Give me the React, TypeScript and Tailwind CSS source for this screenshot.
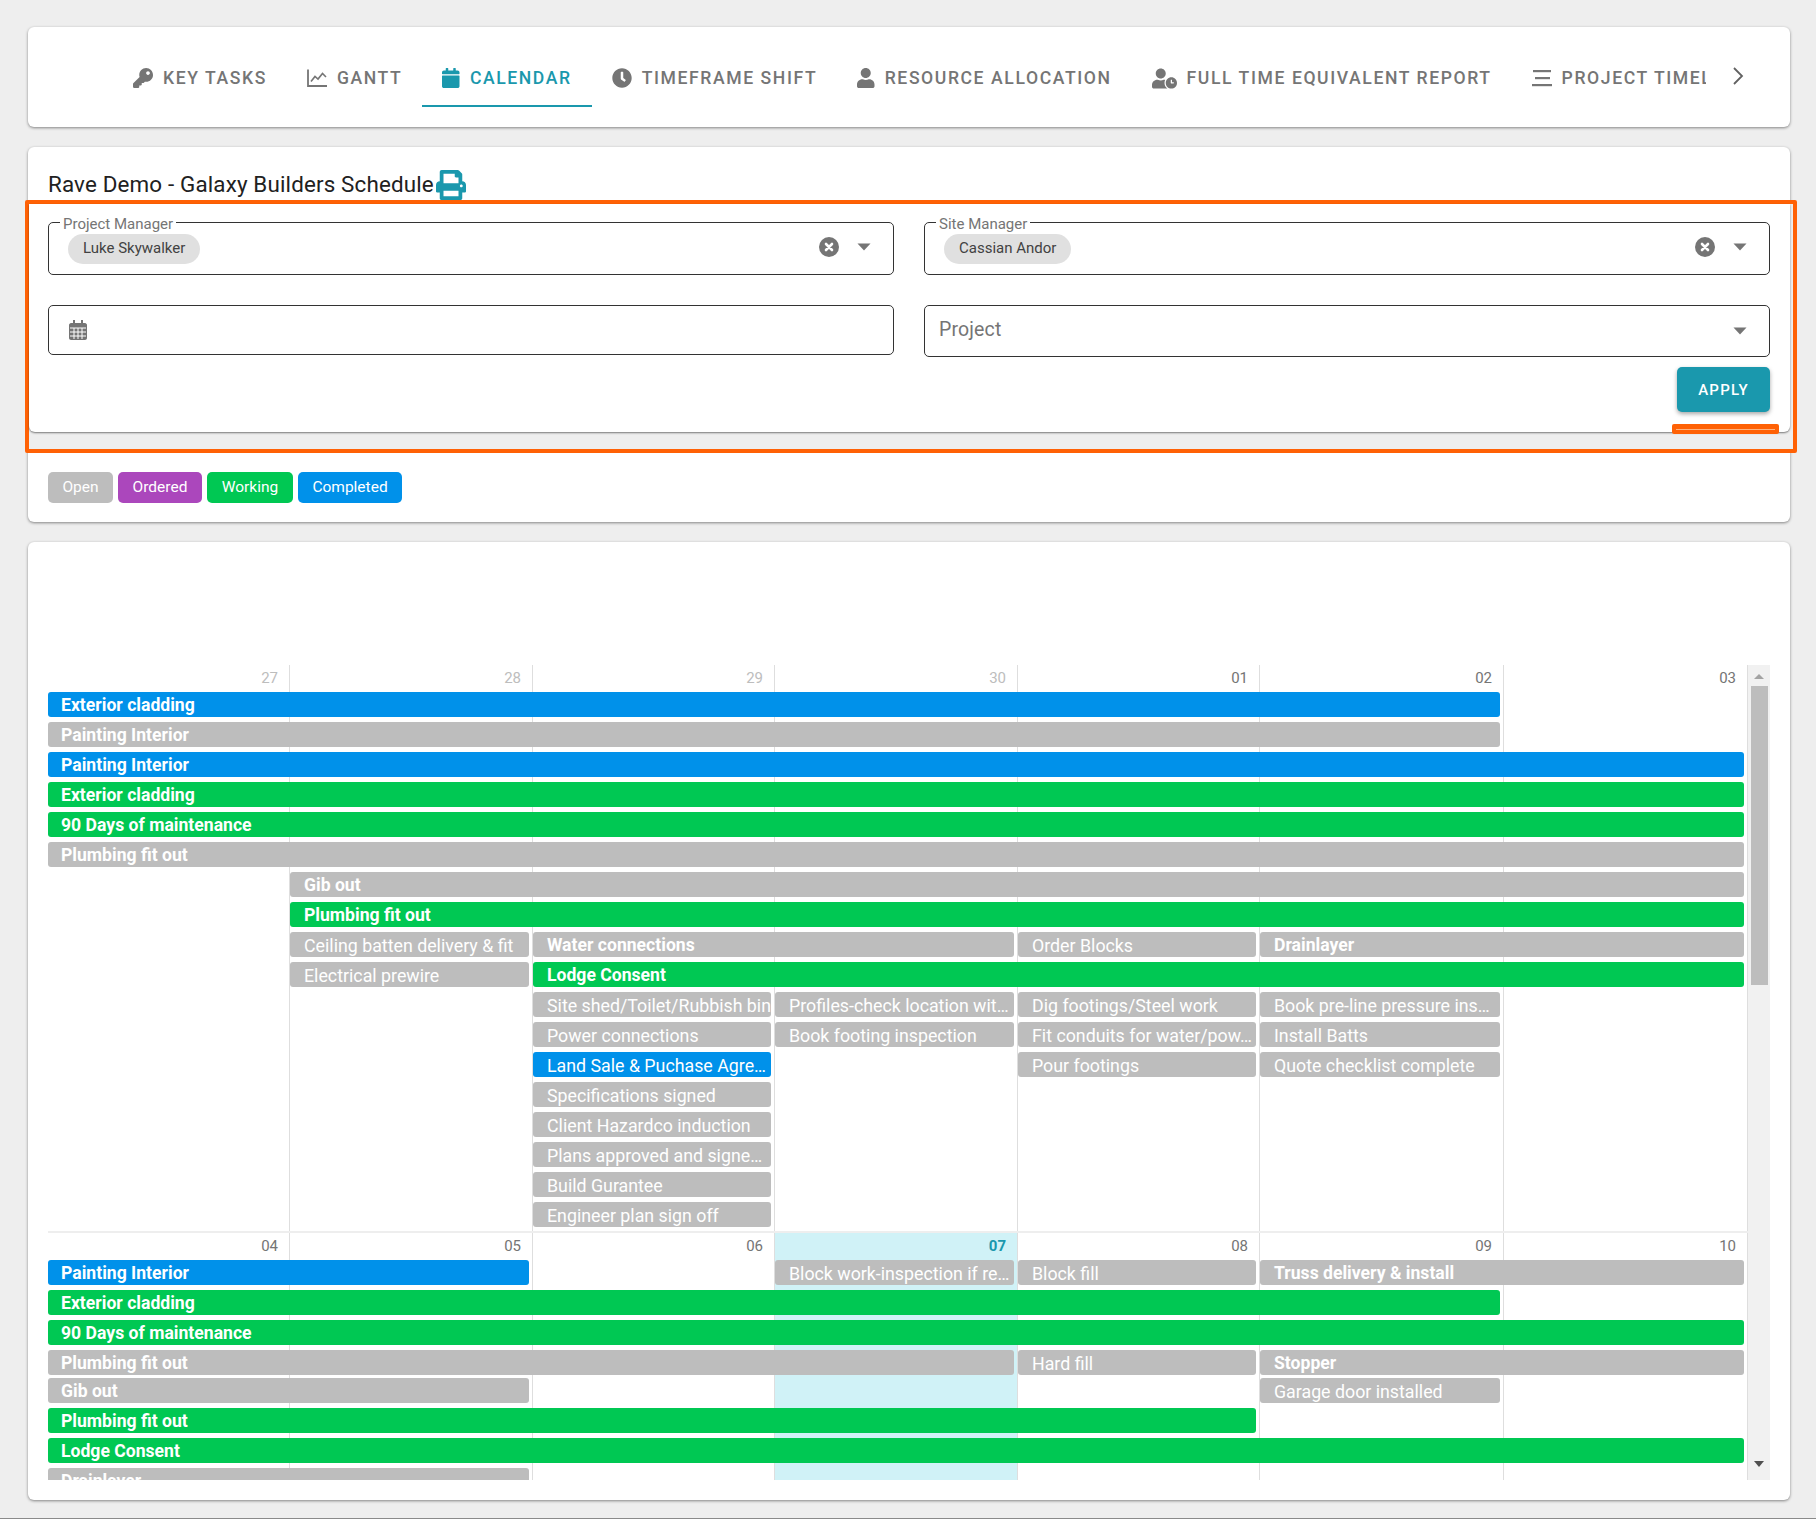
import React from 'react';
import { FaKey, FaCalendar, FaClock, FaUser, FaUserClock, FaPrint } from 'react-icons/fa';

// --- Icons drawn by hand where the packages have no close match ---
const ChartIcon = () => (
  <svg width="20" height="20" viewBox="0 0 20 20" fill="none" stroke="currentColor" strokeWidth="1.8">
    <path d="M1 1.5V18H20" />
    <path d="M4 13.5L8 8.5L11 11L15.5 5.5L19 9" strokeWidth="1.6" />
  </svg>
);

const LinesIcon = () => (
  <svg width="20" height="20" viewBox="0 0 20 20" fill="currentColor">
    <rect x="1" y="2" width="18" height="2.2" />
    <rect x="3" y="9" width="15" height="2.2" />
    <rect x="0" y="16" width="20" height="2.2" />
  </svg>
);

const ChevronRight = () => (
  <svg width="12" height="18" viewBox="0 0 12 18" fill="none" stroke="#616161" strokeWidth="1.8">
    <path d="M2 1L10 9L2 17" />
  </svg>
);

const ClearIcon = () => (
  <svg width="20" height="20" viewBox="0 0 20 20">
    <circle cx="10" cy="10" r="10" fill="#757575" />
    <path d="M7 7L13 13M13 7L7 13" stroke="#fff" strokeWidth="2.6" strokeLinecap="round" />
  </svg>
);

const DropArrow = () => (
  <svg width="14" height="8" viewBox="0 0 14 8" fill="#757575">
    <path d="M0.5 0.5H13.5L7 7.5Z" />
  </svg>
);

const CalendarGridIcon = () => (
  <svg width="18" height="20" viewBox="0 0 18 20">
    <path d="M4 0H6V3H12V0H14V3H16C17 3 18 4 18 5V18C18 19 17 20 16 20H2C1 20 0 19 0 18V5C0 4 1 3 2 3H4Z" fill="#757575" />
    <path d="M1 8H17M1 12H17M1 16H17M5 8V19M9 8V19M13 8V19" stroke="#fff" strokeWidth="1" />
  </svg>
);

// --- Tabs ---
const tabs = [
  { label: 'Key Tasks', icon: <FaKey size={20} /> },
  { label: 'Gantt', icon: <ChartIcon /> },
  { label: 'Calendar', icon: <FaCalendar className="h-5 w-[17.5px]" />, active: true },
  { label: 'Timeframe Shift', icon: <FaClock size={20} /> },
  { label: 'Resource Allocation', icon: <FaUser className="h-5 w-[17.5px]" /> },
  { label: 'Full Time Equivalent Report', icon: <FaUserClock size={25} /> },
  { label: 'Project Timeline', icon: <LinesIcon /> },
];

// --- Calendar data ---
type Tone = 'blue' | 'gray' | 'green';
type Bar = { title: string; tone: Tone; place: string; bold?: boolean };

const toneClass: Record<Tone, string> = {
  blue: 'bg-[#0091ea]',
  gray: 'bg-[#bdbdbd]',
  green: 'bg-[#00c853]',
};

const weekCols = 'grid-cols-[242px_243px_242px_243px_242px_244px_244px]';

const weekOneDays = ['27', '28', '29', '30', '01', '02', '03'];
const weekTwoDays = ['04', '05', '06', '07', '08', '09', '10'];

const weekOne: Bar[][] = [
  [{ title: 'Exterior cladding', tone: 'blue', place: 'col-start-1 col-span-6', bold: true }],
  [{ title: 'Painting Interior', tone: 'gray', place: 'col-start-1 col-span-6', bold: true }],
  [{ title: 'Painting Interior', tone: 'blue', place: 'col-start-1 col-span-7', bold: true }],
  [{ title: 'Exterior cladding', tone: 'green', place: 'col-start-1 col-span-7', bold: true }],
  [{ title: '90 Days of maintenance', tone: 'green', place: 'col-start-1 col-span-7', bold: true }],
  [{ title: 'Plumbing fit out', tone: 'gray', place: 'col-start-1 col-span-7', bold: true }],
  [{ title: 'Gib out', tone: 'gray', place: 'col-start-2 col-span-6', bold: true }],
  [{ title: 'Plumbing fit out', tone: 'green', place: 'col-start-2 col-span-6', bold: true }],
  [
    { title: 'Ceiling batten delivery & fit', tone: 'gray', place: 'col-start-2 col-span-1' },
    { title: 'Water connections', tone: 'gray', place: 'col-start-3 col-span-2', bold: true },
    { title: 'Order Blocks', tone: 'gray', place: 'col-start-5 col-span-1' },
    { title: 'Drainlayer', tone: 'gray', place: 'col-start-6 col-span-2', bold: true },
  ],
  [
    { title: 'Electrical prewire', tone: 'gray', place: 'col-start-2 col-span-1' },
    { title: 'Lodge Consent', tone: 'green', place: 'col-start-3 col-span-5', bold: true },
  ],
  [
    { title: 'Site shed/Toilet/Rubbish bin', tone: 'gray', place: 'col-start-3 col-span-1' },
    { title: 'Profiles-check location wit…', tone: 'gray', place: 'col-start-4 col-span-1' },
    { title: 'Dig footings/Steel work', tone: 'gray', place: 'col-start-5 col-span-1' },
    { title: 'Book pre-line pressure ins…', tone: 'gray', place: 'col-start-6 col-span-1' },
  ],
  [
    { title: 'Power connections', tone: 'gray', place: 'col-start-3 col-span-1' },
    { title: 'Book footing inspection', tone: 'gray', place: 'col-start-4 col-span-1' },
    { title: 'Fit conduits for water/pow…', tone: 'gray', place: 'col-start-5 col-span-1' },
    { title: 'Install Batts', tone: 'gray', place: 'col-start-6 col-span-1' },
  ],
  [
    { title: 'Land Sale & Puchase Agre…', tone: 'blue', place: 'col-start-3 col-span-1' },
    { title: 'Pour footings', tone: 'gray', place: 'col-start-5 col-span-1' },
    { title: 'Quote checklist complete', tone: 'gray', place: 'col-start-6 col-span-1' },
  ],
  [{ title: 'Specifications signed', tone: 'gray', place: 'col-start-3 col-span-1' }],
  [{ title: 'Client Hazardco induction', tone: 'gray', place: 'col-start-3 col-span-1' }],
  [{ title: 'Plans approved and signe…', tone: 'gray', place: 'col-start-3 col-span-1' }],
  [{ title: 'Build Gurantee', tone: 'gray', place: 'col-start-3 col-span-1' }],
  [{ title: 'Engineer plan sign off', tone: 'gray', place: 'col-start-3 col-span-1' }],
];

const weekTwo: Bar[][] = [
  [
    { title: 'Painting Interior', tone: 'blue', place: 'col-start-1 col-span-2', bold: true },
    { title: 'Block work-inspection if re…', tone: 'gray', place: 'col-start-4 col-span-1' },
    { title: 'Block fill', tone: 'gray', place: 'col-start-5 col-span-1' },
    { title: 'Truss delivery & install', tone: 'gray', place: 'col-start-6 col-span-2', bold: true },
  ],
  [{ title: 'Exterior cladding', tone: 'green', place: 'col-start-1 col-span-6', bold: true }],
  [{ title: '90 Days of maintenance', tone: 'green', place: 'col-start-1 col-span-7', bold: true }],
  [
    { title: 'Plumbing fit out', tone: 'gray', place: 'col-start-1 col-span-4', bold: true },
    { title: 'Hard fill', tone: 'gray', place: 'col-start-5 col-span-1' },
    { title: 'Stopper', tone: 'gray', place: 'col-start-6 col-span-2', bold: true },
  ],
  [
    { title: 'Gib out', tone: 'gray', place: 'col-start-1 col-span-2', bold: true },
    { title: 'Garage door installed', tone: 'gray', place: 'col-start-6 col-span-1' },
  ],
  [{ title: 'Plumbing fit out', tone: 'green', place: 'col-start-1 col-span-5', bold: true }],
  [{ title: 'Lodge Consent', tone: 'green', place: 'col-start-1 col-span-7', bold: true }],
  [{ title: 'Drainlayer', tone: 'gray', place: 'col-start-1 col-span-2', bold: true }],
];

// --- Small pieces ---
const EventBar = ({ bar }: { bar: Bar }) => (
  <div
    className={`${bar.place} ${toneClass[bar.tone]} mr-1 h-[25px] overflow-hidden whitespace-nowrap rounded-[3px] pt-px leading-[25px] text-white ${bar.place.includes('col-start-1') ? 'pl-[13px]' : 'pl-[14px]'} ${bar.bold ? 'text-[17.6px] font-bold' : 'text-[17.8px] font-normal'}`}
  >
    {bar.title}
  </div>
);

const Week = ({
  days,
  rows,
  muted = 0,
  today,
  className,
}: {
  days: string[];
  rows: Bar[][];
  muted?: number;
  today?: number;
  className: string;
}) => (
  <div className={`relative overflow-hidden ${className}`}>
    <div className={`absolute inset-0 grid ${weekCols}`}>
      {days.map((day, i) => (
        <div
          key={day}
          className={`border-r border-[#dedede] pt-[3px] pr-[11px] text-right text-[15px] leading-5 ${i === today ? 'bg-[#d0f2f7] font-bold text-[#1a98ad]' : i < muted ? 'text-[#bdbdbd]' : 'text-[#757575]'}`}
        >
          {day}
        </div>
      ))}
    </div>
    <div className="relative pt-[27px]">
      {rows.map((row, i) => (
        <div key={i} className={`grid ${weekCols} ${rows === weekTwo && i === 3 ? 'h-[28px]' : 'h-[30px]'}`}>
          {row.map(bar => (
            <EventBar key={bar.title + bar.place} bar={bar} />
          ))}
        </div>
      ))}
    </div>
  </div>
);

const Chip = ({ label }: { label: string }) => (
  <span className="flex h-[30px] items-center rounded-full bg-[#e0e0e0] px-[15px] text-[15px] text-[#424242]">
    {label}
  </span>
);

const ManagerField = ({ legend, person }: { legend: string; person: string }) => (
  <div className="relative flex h-[53px] items-center rounded-[5px] border border-[#333] pr-[22px] pl-[19px]">
    <span className="absolute -top-[9px] left-[11px] bg-white px-[3px] text-[15px] leading-5 text-[#757575]">
      {legend}
    </span>
    <Chip label={person} />
    <div className="mb-[3px] ml-auto flex items-center gap-[18px]">
      <ClearIcon />
      <DropArrow />
    </div>
  </div>
);

const statuses = [
  { label: 'Open', cls: 'w-[65px] bg-[#bdbdbd]' },
  { label: 'Ordered', cls: 'w-[84px] bg-[#ab47bc]' },
  { label: 'Working', cls: 'w-[86px] bg-[#00c853]' },
  { label: 'Completed', cls: 'w-[104px] bg-[#0091ea]' },
];

const cardClass = 'rounded-[6px] bg-white shadow-[0_1px_3px_rgba(0,0,0,0.45)]';

const App = () => (
  <div className="min-h-[1519px] border-b border-[#8a8a8a] bg-[#eeeeee] pt-[27px] pr-[26px] pl-7 font-[Roboto,sans-serif]">
    {/* Tabs */}
    <div className={`flex h-[100px] items-start pt-5 pl-[85px] ${cardClass}`}>
      <div className="flex w-[1593px] overflow-hidden">
        {tabs.map(tab => (
          <div
            key={tab.label}
            className={`flex h-[60px] shrink-0 items-center gap-[10px] border-b-2 px-5 pt-[4px] text-[17.6px] font-medium tracking-[1.58px] whitespace-nowrap uppercase ${tab.active ? 'border-[#1a98ad] text-[#1a98ad]' : 'border-transparent text-[#757575]'}`}
          >
            {tab.icon}
            {tab.label}
          </div>
        ))}
      </div>
      <div className="mt-[20px] ml-[26px]">
        <ChevronRight />
      </div>
    </div>

    {/* Filters */}
    <div className={`mt-5 h-[375px] ${cardClass}`}>
      <div className="flex items-center gap-[2px] pt-[23px] pl-5">
        <h1 className="pb-[2px] text-[22.4px] leading-[28px] font-normal tracking-[0.15px] text-[#212121]">
          Rave Demo - Galaxy Builders Schedule
        </h1>
        <FaPrint size={30} className="text-[#1a98ad]" />
      </div>

      <div className="relative -mr-[7px] -ml-[3px] rounded-[2px] border-4 border-[#ff6105] bg-[#eeeeee] pb-[17px]">
        <div className="mr-[3px] rounded-b-[6px] bg-white pt-[18px] pr-5 pb-5 pl-[19px] shadow-[0_1px_2px_rgba(0,0,0,0.5)]">
          <div className="grid grid-cols-2 items-start gap-x-[30px] gap-y-[30px]">
            <ManagerField legend="Project Manager" person="Luke Skywalker" />
            <ManagerField legend="Site Manager" person="Cassian Andor" />
            <div className="flex h-[50px] items-center rounded-[5px] border border-[#333] pl-[20px]">
              <CalendarGridIcon />
            </div>
            <div className="flex h-[52px] items-center justify-between rounded-[5px] border border-[#333] pr-[22px] pl-[14px] text-[19.5px] tracking-[0.15px] text-[#757575]">
              <span className="pb-[2px]">Project</span>
              <DropArrow />
            </div>
          </div>
          <div className="mt-[10px] flex justify-end">
            <button className="h-[45px] w-[93px] rounded-[5px] bg-[#1a98ad] pt-[2px] text-[15px] font-medium tracking-[1.25px] text-white uppercase shadow-[0_2px_4px_rgba(0,0,0,0.35)]">
              Apply
            </button>
          </div>
        </div>
        <div className="absolute top-[220px] left-[1643px] flex h-[10px] w-[107px] items-center rounded-[2px] bg-[#ff6105] px-1">
          <div className="h-px w-full bg-[#ffb27f]" />
        </div>
      </div>

      <div className="flex gap-[5px] pt-[19px] pl-5">
        {statuses.map(s => (
          <div
            key={s.label}
            className={`flex h-[31px] items-center justify-center rounded-[5px] pt-px text-[15.5px] text-white ${s.cls}`}
          >
            {s.label}
          </div>
        ))}
      </div>
    </div>

    {/* Calendar */}
    <div className={`mt-5 h-[958px] pt-[123px] pl-5 ${cardClass}`}>
      <div className="flex h-[815px] w-[1722px] overflow-hidden">
        <div className="w-[1700px]">
          <Week days={weekOneDays} rows={weekOne} muted={4} className="h-[566px]" />
          <Week days={weekTwoDays} rows={weekTwo} today={3} className="h-[249px] border-t-2 border-[#eeeeee]" />
        </div>
        <div className="flex w-[22px] flex-col items-center bg-[#f1f1f1]">
          <svg width="10" height="21" viewBox="0 0 10 21" fill="#a3a3a3">
            <path d="M5 9L10 14H0Z" />
          </svg>
          <div className="h-[299px] w-[17px] bg-[#bdbdbd]" />
          <svg className="mt-auto" width="10" height="21" viewBox="0 0 10 21" fill="#505050">
            <path d="M0 2H10L5 8Z" />
          </svg>
        </div>
      </div>
    </div>
  </div>
);

export default App;
